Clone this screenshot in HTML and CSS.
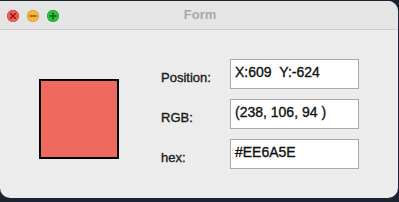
FILE: index.html
```html
<!DOCTYPE html>
<html>
<head>
<meta charset="utf-8">
<link rel="stylesheet" href="styles.css">
</head>
<body>
<div class="window">
  <div class="titlebar">
    <div class="lights">
      <span class="light close"><svg viewBox="0 0 12 12" width="12" height="12"><path d="M3.6 3.6 L8.4 8.4 M8.4 3.6 L3.6 8.4" stroke="#7a0d08" stroke-width="1.3" stroke-linecap="round"/></svg></span>
      <span class="light min"><svg viewBox="0 0 12 12" width="12" height="12"><path d="M3 6 H9" stroke="#8a5300" stroke-width="1.4" stroke-linecap="round"/></svg></span>
      <span class="light max"><svg viewBox="0 0 12 12" width="12" height="12"><path d="M3 6 H9 M6 3 V9" stroke="#0a5a12" stroke-width="1.4" stroke-linecap="round"/></svg></span>
    </div>
    <div class="title">Form</div>
  </div>
  <div class="content">
    <div class="swatch"></div>
    <div class="form">
      <div class="label">Position:</div>
      <div class="field">X:609&nbsp;&nbsp;Y:-624</div>
      <div class="label">RGB:</div>
      <div class="field">(238, 106, 94 )</div>
      <div class="label">hex:</div>
      <div class="field">#EE6A5E</div>
    </div>
  </div>
</div>
</body>
</html>
```
FILE: styles.css
```css
html, body {
  margin: 0;
  padding: 0;
  width: 399px;
  height: 202px;
  overflow: hidden;
  background: #1c2432;
  font-family: "Liberation Sans", Arial, sans-serif;
}
.window {
  margin-top: 1px;
  width: 398px;
  height: 197px;
  background: #ececec;
  border-radius: 0 10px 10px 10px;
  overflow: hidden;
  display: flex;
  flex-direction: column;
}
.titlebar {
  height: 28px;
  border-bottom: 1px solid #cdcdcd;
  background: #e5e5e5;
  position: relative;
  display: flex;
  align-items: center;
}
.lights {
  display: flex;
  gap: 8px;
  padding-left: 7px;
  padding-top: 2px;
}
.light {
  width: 12px;
  height: 12px;
  border-radius: 50%;
  display: block;
  box-sizing: border-box;
}
.light svg { display: block; }
.close { background: #ee5b55; box-shadow: inset 0 0 0 0.5px #c9413b; }
.min { background: #f4b73c; box-shadow: inset 0 0 0 0.5px #cf962a; }
.max { background: #2cbf3b; box-shadow: inset 0 0 0 0.5px #1f9a2b; }
.title {
  position: absolute;
  left: 0;
  right: 0;
  top: 6px;
  text-align: center;
  font-size: 13px;
  font-weight: bold;
  color: #a9a9a9;
  padding-left: 2px;
}
.content {
  display: flex;
  align-items: flex-start;
  padding: 29px 0 0 39px;
}
.swatch {
  width: 76px;
  height: 76px;
  margin-top: 20px;
  background: #EE6A5E;
  border: 2px solid #000;
}
.form {
  margin-left: 42px;
  display: grid;
  grid-template-columns: 69px 129px;
  row-gap: 10px;
}
.label {
  height: 30px;
  box-sizing: border-box;
  padding-top: 11px;
  font-size: 13px;
  color: #1a1a1a;
  -webkit-text-stroke: 0.35px #1a1a1a;
}
.field {
  height: 30px;
  box-sizing: border-box;
  border: 1px solid #a9a9a9;
  background: #fff;
  padding: 4px 0 0 4px;
  font-size: 14px;
  color: #111;
  -webkit-text-stroke: 0.35px #111;
  white-space: nowrap;
}
```
